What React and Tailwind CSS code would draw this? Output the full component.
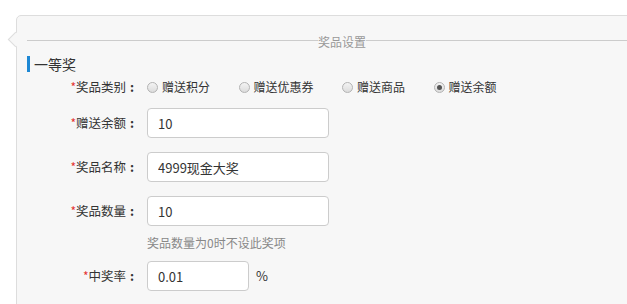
import React, { useState } from "react";

const FONT = { fontFamily: '"Noto Sans CJK SC", "Noto Sans", sans-serif' };

const prizeTypes = ["赠送积分", "赠送优惠券", "赠送商品", "赠送余额"];

function Radio({ label, checked, onClick }) {
  return (
    <label onClick={onClick} className="flex items-center mr-[28.5px] cursor-pointer">
      <span className="w-[11px] h-[11px] rounded-full border border-[#b3b3b3] bg-gradient-to-b from-[#f4f4f4] to-[#dcdcdc] flex items-center justify-center">
        {checked && <span className="w-[5px] h-[5px] rounded-full bg-[#555]" />}
      </span>
      <span className="ml-[4px] text-[12px] leading-[16px] text-[#333]">{label}</span>
    </label>
  );
}

// colon kept in its own centered cell, like the fullwidth colon in the original font
function Label({ children }) {
  return (
    <div className="w-[111px] shrink-0 flex justify-end items-center text-[12.5px] leading-[16px] text-[#333]">
      <span className="text-[#e53333] text-[12px]">*</span>
      <span>{children}</span>
      <span className="w-[12px] text-center font-bold">:</span>
    </div>
  );
}

function TextInput({ value, width }) {
  return (
    <input
      type="text"
      defaultValue={value}
      style={FONT}
      className={`${width} h-[30px] px-[10px] text-[13px] text-[#333] bg-white border border-[#ccc] rounded-[4px] outline-none`}
    />
  );
}

export default function App() {
  const [prizeType, setPrizeType] = useState(3);

  return (
    <div style={FONT} className="w-[627px] h-[304px] bg-white overflow-hidden pt-[15px] pl-[16px]">
      <div className="relative w-[640px] h-[320px] bg-[#f7f7f7] border border-[#ddd] rounded-[5px] pl-[10px]">
        {/* little arrow on the left edge */}
        <div className="absolute left-[-7px] top-[18px] w-[11px] h-[11px] rotate-45 bg-[#f7f7f7] border-l border-b border-[#ddd]" />

        {/* section divider */}
        <div className="mt-[18px] h-[12px] flex items-center">
          <div className="w-[291px] h-px bg-[#ccc]" />
          <span className="text-[12px] leading-[12px] text-[#999] translate-y-[1.5px]">奖品设置</span>
          <div className="flex-1 h-px bg-[#ccc]" />
        </div>

        <div className="mt-[10px] h-[16px] flex items-center">
          <div className="w-[3px] h-[16px] bg-[#1e88d4]" />
          <span className="ml-[4px] text-[14px] leading-[16px] text-[#333]">一等奖</span>
        </div>

        <div className="flex flex-col">
          <div className="h-[30px] flex items-center">
            <Label>奖品类别</Label>
            <div className="ml-[9px] flex items-center">
              {prizeTypes.map((t, i) => (
                <Radio key={t} label={t} checked={prizeType === i} onClick={() => setPrizeType(i)} />
              ))}
            </div>
          </div>

          <div className="mt-[6px] flex items-center">
            <Label>赠送余额</Label>
            <div className="ml-[9px]"><TextInput value="10" width="w-[182px]" /></div>
          </div>

          <div className="mt-[14px] flex items-center">
            <Label>奖品名称</Label>
            <div className="ml-[9px]"><TextInput value="4999现金大奖" width="w-[182px]" /></div>
          </div>

          <div className="mt-[14px] flex items-center">
            <Label>奖品数量</Label>
            <div className="ml-[9px]"><TextInput value="10" width="w-[182px]" /></div>
          </div>

          <div className="mt-[8px] pl-[120px] text-[12px] leading-[18px] text-[#888]">奖品数量为0时不设此奖项</div>

          <div className="mt-[9px] flex items-center">
            <Label>中奖率</Label>
            <div className="ml-[9px] flex items-center">
              <TextInput value="0.01" width="w-[102px]" />
              <span className="ml-[7px] text-[13px] text-[#333]">%</span>
            </div>
          </div>
        </div>
      </div>
    </div>
  );
}
